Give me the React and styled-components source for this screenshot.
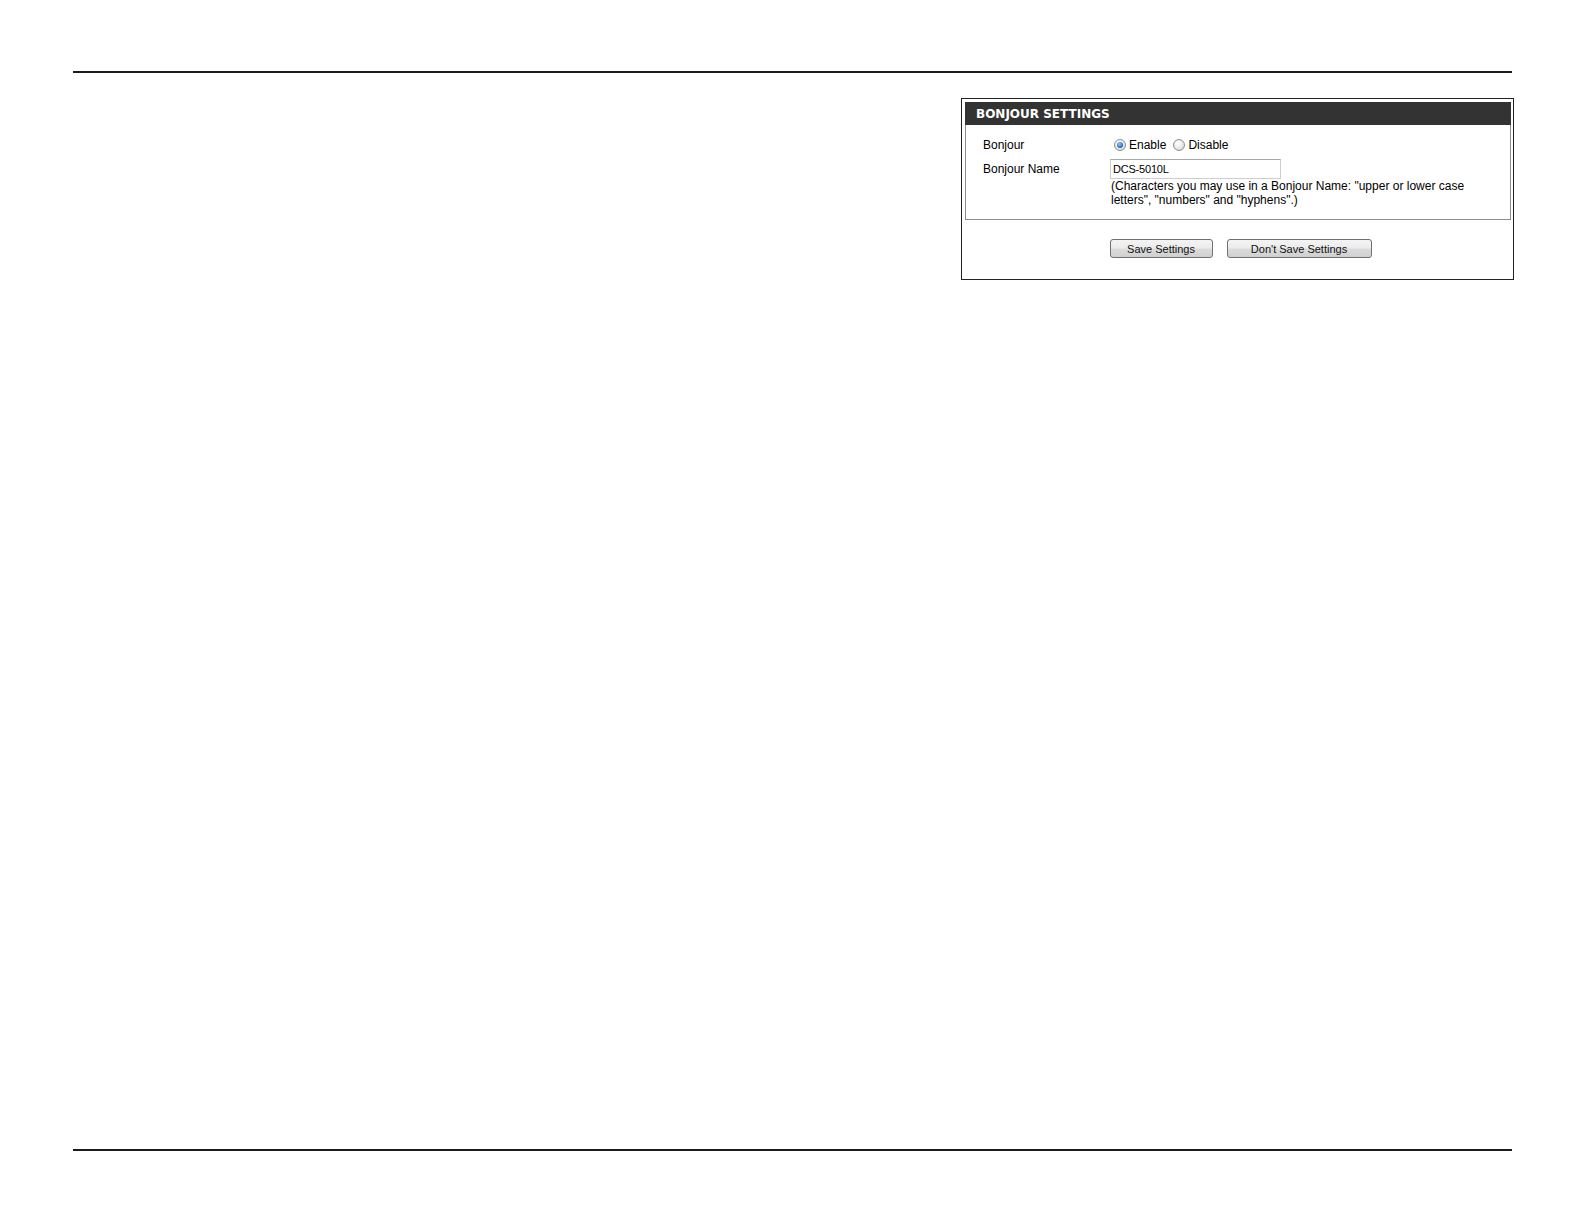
import React from "react";
import styled, { createGlobalStyle } from "styled-components";

const Global = createGlobalStyle`
  html, body { margin: 0; padding: 0; background: #fff; }
  body { font-family: "Liberation Sans", Arial, sans-serif; color: #000; }
`;

const Page = styled.div`
  width: 1584px;
  height: 1224px;
  display: flex;
  flex-direction: column;
`;

const Rule = styled.div`
  margin-left: 73px;
  width: 1439px;
  height: 2px;
  background: #1c1c1c;
  margin-top: ${(p) => p.$top}px;
`;

const Panel = styled.div`
  margin-top: 25px;
  margin-left: 961px;
  width: 553px;
  height: 182px;
  box-sizing: border-box;
  border: 1px solid #222;
  padding: 3px 2px 0 3px;
  display: flex;
  flex-direction: column;
`;

const Box = styled.div`
  border: 1px solid #8c8c8c;
  border-top: none;
  display: flex;
  flex-direction: column;
  height: 118px;
  box-sizing: border-box;
`;

const Header = styled.div`
  background: #333333;
  height: 23px;
  margin: 0 -1px;
  display: flex;
  align-items: center;
  padding-left: 11px;
  font-family: "DejaVu Sans", Verdana, sans-serif;
  font-weight: bold;
  font-size: 12px;
  color: #fff;
`;

const Content = styled.div`
  padding: 10px 0 0 17px;
  display: grid;
  grid-template-columns: 127px 1fr;
  row-gap: 4px;
  font-size: 12px;
`;

const Label = styled.div`
  height: 20px;
  line-height: 20px;
`;

const Value = styled.div`
  display: flex;
  flex-direction: column;
`;

const RadioRow = styled.div`
  height: 20px;
  display: flex;
  align-items: center;
  padding-left: 4px;
`;

const Radio = styled.span`
  width: 12px;
  height: 12px;
  box-sizing: border-box;
  border-radius: 50%;
  border: 1px solid #8e8f8f;
  background: radial-gradient(circle at 40% 35%, #ffffff 0%, #e8e8e8 55%, #c9c9c9 100%);
  display: inline-flex;
  align-items: center;
  justify-content: center;
  margin-right: 3px;
  &::after {
    content: "";
    width: 6px;
    height: 6px;
    border-radius: 50%;
    display: ${(p) => (p.$checked ? "block" : "none")};
    background: radial-gradient(circle at 40% 35%, #8fd0ff 0%, #2a74c4 60%, #123e75 100%);
  }
`;

const RadioLabel = styled.span`
  margin-right: 7px;
`;

const TextInput = styled.div`
  width: 171px;
  height: 20px;
  box-sizing: border-box;
  border: 1px solid #cdcdcd;
  border-top-color: #a8a8a8;
  font-size: 11px;
  line-height: 18px;
  padding-left: 2px;
  letter-spacing: -0.2px;
`;

const Help = styled.div`
  padding-left: 1px;
  line-height: 14px;
  width: 380px;
`;

const Buttons = styled.div`
  display: flex;
  justify-content: center;
  gap: 14px;
  padding-top: 19px;
  padding-left: 5px;
`;

const Button = styled.div`
  width: ${(p) => p.$w}px;
  height: 19px;
  box-sizing: border-box;
  border: 1px solid #707070;
  border-radius: 3px;
  background: linear-gradient(#f4f4f4 0%, #ebebeb 48%, #dcdcdc 52%, #d0d0d0 100%);
  font-size: 11px;
  display: flex;
  align-items: center;
  justify-content: center;
  color: #111;
`;

export default function App() {
  return (
    <>
      <Global />
      <Page>
        <Rule $top={71} />
        <Panel>
          <Box>
            <Header>BONJOUR SETTINGS</Header>
            <Content>
              <Label>Bonjour</Label>
              <RadioRow>
                <Radio $checked />
                <RadioLabel>Enable</RadioLabel>
                <Radio />
                <RadioLabel>Disable</RadioLabel>
              </RadioRow>
              <Label>Bonjour Name</Label>
              <Value>
                <TextInput>DCS-5010L</TextInput>
                <Help>
                  (Characters you may use in a Bonjour Name: "upper or lower case
                  letters", "numbers" and "hyphens".)
                </Help>
              </Value>
            </Content>
          </Box>
          <Buttons>
            <Button $w={103}>Save Settings</Button>
            <Button $w={145}>Don't Save Settings</Button>
          </Buttons>
        </Panel>
        <Rule $top={869} />
      </Page>
    </>
  );
}
